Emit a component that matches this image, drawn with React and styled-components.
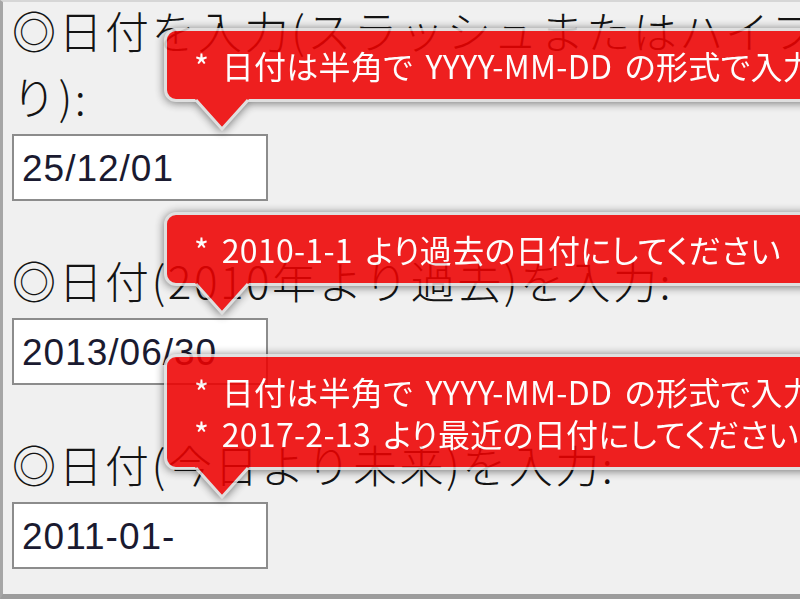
import styled, { createGlobalStyle } from "styled-components";

const GlobalStyle = createGlobalStyle`
  html, body {
    margin: 0;
    padding: 0;
    background: #f0f0f0;
    overflow: hidden;
  }
`;

const Frame = styled.div`
  box-sizing: border-box;
  width: 1000px;
  height: 599px;
  padding: 0 0 0 9px;
  background: #f0f0f0;
  border-left: 3px solid #a6a6a6;
  border-top: 2px solid #d6d6d6;
  border-bottom: 5px solid #9c9c9c;
  overflow: hidden;
`;

const Field = styled.div`
  margin-top: ${(p) => (p.$first ? "-5px" : "46px")};
`;

const Label = styled.div`
  width: 960px;
  font-family: "Noto Sans CJK JP", "Noto Sans", sans-serif;
  font-size: 44px;
  font-weight: 300;
  letter-spacing: 2.5px;
  line-height: 66px;
  color: #141414;
`;

const InputWrap = styled.div`
  position: relative;
  margin-top: 5px;
  width: 256px;
`;

const DateInput = styled.input`
  box-sizing: border-box;
  display: block;
  width: 256px;
  height: 67px;
  margin: 0;
  padding: 2px 0 0 8px;
  border: 2px solid #8c8c8c;
  background: #fff;
  font-family: "Liberation Sans", Arial, sans-serif;
  font-size: 37px;
  letter-spacing: 1px;
  color: #1a1a30;
  outline: none;
`;

// validation message bubble, laid over the field above the input
const Bubble = styled.div`
  position: absolute;
  left: 152px;
  bottom: calc(100% + 2px);
  opacity: 0.87;
  filter: drop-shadow(0 1px 5px rgba(0, 0, 0, 0.6));
`;

const BubbleBody = styled.div`
  background: #ee0101;
  border: 3px solid #dddddd;
  border-radius: 12px;
  padding: 13px 40px 13px 27px;
  color: #fff;
  font-family: "Noto Sans CJK JP", "Noto Sans", sans-serif;
  font-size: 32px;
  font-feature-settings: "palt";
  letter-spacing: 0.3px;
  word-spacing: 5px;
  line-height: 42px;
  white-space: nowrap;
`;

const Arrow = styled.svg`
  display: block;
  margin: -3px 0 0 31px;
`;

const BubbleArrow = () => (
  <Arrow width="54" height="33" viewBox="0 0 54 33">
    <polygon points="0,0 54,0 27,30" fill="#ee0101" />
    <polyline
      points="1,1 27,30 53,1"
      fill="none"
      stroke="#dddddd"
      strokeWidth="3"
    />
  </Arrow>
);

const fields = [
  {
    label: "◎日付を入力(スラッシュまたはハイフン区切り):",
    value: "25/12/01",
    errors: ["* 日付は半角で YYYY-MM-DD の形式で入力してください"],
  },
  {
    label: "◎日付(2010年より過去)を入力:",
    value: "2013/06/30",
    errors: ["* 2010-1-1 より過去の日付にしてください"],
  },
  {
    label: "◎日付(今日より未来)を入力:",
    value: "2011-01-",
    errors: [
      "* 日付は半角で YYYY-MM-DD の形式で入力してください",
      "* 2017-2-13 より最近の日付にしてください",
    ],
  },
];

export default function App() {
  return (
    <>
      <GlobalStyle />
      <Frame>
        {fields.map((f, i) => (
          <Field key={i} $first={i === 0}>
            <Label>{f.label}</Label>
            <InputWrap>
              <DateInput type="text" value={f.value} readOnly />
              <Bubble>
                <BubbleBody>
                  {f.errors.map((e, j) => (
                    <div key={j}>{e}</div>
                  ))}
                </BubbleBody>
                <BubbleArrow />
              </Bubble>
            </InputWrap>
          </Field>
        ))}
      </Frame>
    </>
  );
}
